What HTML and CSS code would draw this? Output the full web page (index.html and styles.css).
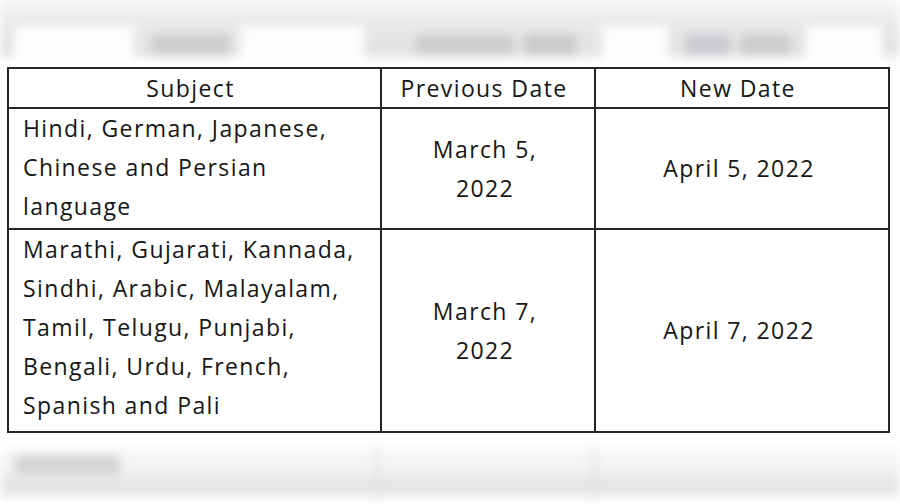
FILE: index.html
```html
<!DOCTYPE html>
<html>
<head>
<meta charset="utf-8">
<link rel="stylesheet" href="styles.css">
</head>
<body>
<div class="page">
  <div class="blur-top">
    <div class="bt-cell"><span class="bt-white w1"></span><span class="bt-text t1"></span><span class="bt-white w2"></span></div>
    <div class="bt-cell"><span class="bt-text t2"></span><span class="bt-text t3"></span></div>
    <div class="bt-cell"><span class="bt-white w3"></span><span class="bt-text t4"></span><span class="bt-text t5"></span><span class="bt-white w4"></span></div>
  </div>
  <table class="dates">
    <colgroup>
      <col class="c1"><col class="c2"><col class="c3">
    </colgroup>
    <thead>
      <tr><th>Subject</th><th>Previous Date</th><th>New Date</th></tr>
    </thead>
    <tbody>
      <tr class="r1">
        <td class="subj">Hindi, German, Japanese,<br>Chinese and Persian<br>language</td>
        <td class="prev">March 5,<br>2022</td>
        <td class="new">April 5, 2022</td>
      </tr>
      <tr class="r2">
        <td class="subj">Marathi, Gujarati, Kannada,<br>Sindhi, Arabic, Malayalam,<br>Tamil, Telugu, Punjabi,<br>Bengali, Urdu, French,<br>Spanish and Pali</td>
        <td class="prev">March 7,<br>2022</td>
        <td class="new">April 7, 2022</td>
      </tr>
    </tbody>
  </table>
  <div class="blur-bottom">
    <div class="bb-cell bb-first"><span class="bb-text"></span></div>
    <div class="bb-cell"></div>
    <div class="bb-cell"></div>
  </div>
</div>
</body>
</html>
```
FILE: styles.css
```css
html, body {
  margin: 0;
  padding: 0;
  background: #ffffff;
}
.page {
  width: 900px;
  height: 504px;
  overflow: hidden;
  position: relative;
  display: flex;
  flex-direction: column;
}
.blur-top {
  height: 57px;
  flex: none;
  display: flex;
  background: linear-gradient(#f5f5f5 0%, #e8e8e8 45%, #e2e2e2 100%);
  filter: blur(5px);
  padding: 22px 6px 0 6px;
  box-sizing: border-box;
  gap: 8px;
}
.bt-cell {
  display: flex;
  align-items: flex-start;
  gap: 10px;
  padding-top: 4px;
}
.bt-cell:nth-child(1) { width: 370px; }
.bt-cell:nth-child(2) { width: 210px; justify-content: center; }
.bt-cell:nth-child(3) { flex: 1; }
.bt-white {
  display: block;
  height: 32px;
  background: #fdfdfd;
}
.bt-text {
  display: block;
  height: 22px;
  margin-top: 8px;
  background: #cdcfcf;
}
.w1 { width: 120px; margin-left: 8px; }
.t1 { width: 78px; margin-left: 8px; }
.w2 { width: 124px; }
.t2 { width: 98px; margin-left: 14px; }
.t3 { width: 52px; background: #cbcbcb; }
.w3 { width: 66px; }
.t4 { width: 44px; margin-left: 8px; background: #cacad0; }
.t5 { width: 50px; background: #cdcdcd; }
.w4 { width: 76px; margin-left: 6px; }

.dates {
  margin: 10px 0 0 7px;
  width: 881px;
  border-collapse: collapse;
  font-family: "Open Sans", Lato, sans-serif;
  font-size: 23px;
  letter-spacing: 1.4px;
  font-variant-ligatures: none;
  color: #161616;
  table-layout: fixed;
  flex: none;
}
.c1 { width: 373px; }
.c2 { width: 214px; }
.c3 { width: 294px; }
.dates th, .dates td {
  border: 2px solid #262626;
  line-height: 39px;
  padding: 0;
}
.dates th {
  font-weight: normal;
  height: 38px;
  line-height: 38px;
  text-align: center;
  padding-right: 8px;
}
.subj {
  text-align: left;
  padding-left: 14px !important;
  vertical-align: top;
}
.prev, .new {
  text-align: center;
  vertical-align: middle;
  padding-right: 6px !important;
}
.r1 td { height: 119px; }
.r2 td { height: 201px; }

.blur-bottom {
  margin-top: 14px;
  height: 52px;
  flex: none;
  display: flex;
  background: linear-gradient(#fafafa 0%, #f2f2f2 45%, #e2e2e2 78%, #f6f6f6 100%);
  filter: blur(5px);
}
.bb-cell {
  border-right: 3px solid #dedede;
}
.bb-cell:nth-child(1) { width: 376px; }
.bb-cell:nth-child(2) { width: 214px; }
.bb-cell:nth-child(3) { flex: 1; border-right: none; }
.bb-text {
  display: block;
  width: 105px;
  height: 20px;
  margin: 8px 0 0 15px;
  background: #d6d4d6;
}
```
